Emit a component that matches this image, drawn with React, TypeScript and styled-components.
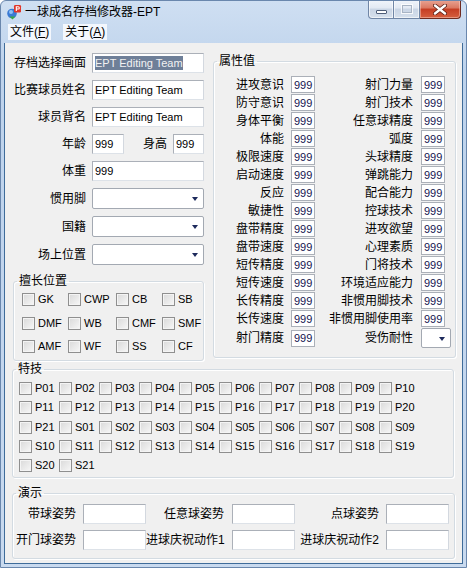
import React from 'react';
import styled, { createGlobalStyle } from 'styled-components';

const UI_FONT = `"Liberation Sans", "Noto Sans CJK SC", sans-serif`;

const leftAttrs = [
    '进攻意识', '防守意识', '身体平衡', '体能', '极限速度', '启动速度', '反应', '敏捷性',
    '盘带精度', '盘带速度', '短传精度', '短传速度', '长传精度', '长传速度', '射门精度',
];

const rightAttrs = [
    '射门力量', '射门技术', '任意球精度', '弧度', '头球精度', '弹跳能力', '配合能力', '控球技术',
    '进攻欲望', '心理素质', '门将技术', '环境适应能力', '非惯用脚技术', '非惯用脚使用率', '受伤耐性',
];

const positions = ['GK', 'CWP', 'CB', 'SB', 'DMF', 'WB', 'CMF', 'SMF', 'AMF', 'WF', 'SS', 'CF'];

const traits = [
    ...Array.from({ length: 21 }, (_, i) => `P${String(i + 1).padStart(2, '0')}`),
    ...Array.from({ length: 21 }, (_, i) => `S${String(i + 1).padStart(2, '0')}`),
];

const demoRows = [
    ['带球姿势', '任意球姿势', '点球姿势'],
    ['开门球姿势', '进球庆祝动作1', '进球庆祝动作2'],
];

// label width / gap before each demo input
const demoCols = [
    { w: 63, gap: 7 },
    { w: 78, gap: 8 },
    { w: 84, gap: 7 },
];

const App = (): JSX.Element => {
    const renderTitleBar = () => (
        <TitleBar>
            <AppIcon width="16" height="16" viewBox="0 0 16 16">
                <circle cx="6" cy="9.5" r="4.8" fill="#3a7ad4" />
                <circle cx="5" cy="8" r="2" fill="#8fc0f5" />
                <path d="M3.5 12.5 L6.5 15.5 L9.5 12.5 Z" fill="#37a843" />
                <rect x="8" y="1" width="7" height="7.5" rx="1.2" fill="#e0362a" />
                <path d="M10.3 7 V2.8 H12.2 A1.1 1.1 0 0 1 12.2 5 H10.3" stroke="#fff" strokeWidth="1.1" fill="none" />
            </AppIcon>
            <TitleText>一球成名存档修改器-EPT</TitleText>

            <Controls>
                <CtrlButton $w={26} $corner="left">
                    <MinGlyph />
                </CtrlButton>
                <CtrlButton $w={26}>
                    <MaxGlyph />
                </CtrlButton>
                <CloseButton>
                    <svg width="14" height="11" viewBox="0 0 14 11">
                        <path d="M2 1.5 L12 9.5 M12 1.5 L2 9.5" stroke="#5a1d14" strokeWidth="4" strokeLinecap="round" />
                        <path d="M2 1.5 L12 9.5 M12 1.5 L2 9.5" stroke="#fff" strokeWidth="2.4" strokeLinecap="round" />
                    </svg>
                </CloseButton>
            </Controls>
        </TitleBar>
    );

    const renderMenu = () => (
        <MenuBar>
            <MenuItem>文件(<u>F</u>)</MenuItem>
            <MenuItem>关于(<u>A</u>)</MenuItem>
        </MenuBar>
    );

    const renderForm = () => (
        <Form>
            <FormRow>
                <FormLabel>存档选择画面</FormLabel>
                <Field $w={112}><Selected>EPT Editing Team</Selected></Field>
            </FormRow>
            <FormRow>
                <FormLabel>比赛球员姓名</FormLabel>
                <Field $w={112}>EPT Editing Team</Field>
            </FormRow>
            <FormRow>
                <FormLabel>球员背名</FormLabel>
                <Field $w={112}>EPT Editing Team</Field>
            </FormRow>
            <FormRow>
                <FormLabel>年龄</FormLabel>
                <Field $w={32}>999</Field>
                <InlineLabel>身高</InlineLabel>
                <Field $w={31}>999</Field>
            </FormRow>
            <FormRow>
                <FormLabel>体重</FormLabel>
                <Field $w={112}>999</Field>
            </FormRow>
            {['惯用脚', '国籍', '场上位置'].map((label) => (
                <FormRow key={label}>
                    <FormLabel>{label}</FormLabel>
                    <Combo $w={112}><Arrow /></Combo>
                </FormRow>
            ))}
        </Form>
    );

    const renderPositions = () => (
        <PositionGroup>
            <Legend>擅长位置</Legend>
            <PositionGrid>
                {positions.map((p) => (
                    <CheckItem key={p}>
                        <CheckBox />
                        <CheckText>{p}</CheckText>
                    </CheckItem>
                ))}
            </PositionGrid>
        </PositionGroup>
    );

    const renderAttributes = () => (
        <AttrGroup>
            <Legend>属性值</Legend>
            <AttrList>
                {leftAttrs.map((left, i) => {
                    const right = rightAttrs[i];
                    const isLast = i === leftAttrs.length - 1;
                    return (
                        <AttrRow key={left}>
                            <AttrLabel $w={70} $gap={7}>{left}</AttrLabel>
                            <AttrField>999</AttrField>
                            <AttrLabel $w={98} $gap={8}>{right}</AttrLabel>
                            {isLast ? <Combo $w={30} $h={20}><Arrow /></Combo> : <AttrField>999</AttrField>}
                        </AttrRow>
                    );
                })}
            </AttrList>
        </AttrGroup>
    );

    const renderTraits = () => (
        <TraitGroup>
            <Legend>特技</Legend>
            <TraitGrid>
                {traits.map((t) => (
                    <CheckItem key={t}>
                        <CheckBox />
                        <CheckText>{t}</CheckText>
                    </CheckItem>
                ))}
            </TraitGrid>
        </TraitGroup>
    );

    const renderDemo = () => (
        <DemoGroup>
            <Legend>演示</Legend>
            <DemoBody>
                {demoRows.map((row) => (
                    <DemoRow key={row[0]}>
                        {row.map((label, i) => (
                            <React.Fragment key={label}>
                                <DemoLabel $w={demoCols[i].w} $gap={demoCols[i].gap}>{label}</DemoLabel>
                                <Field $w={63} />
                            </React.Fragment>
                        ))}
                    </DemoRow>
                ))}
            </DemoBody>
        </DemoGroup>
    );

    return (
        <>
            <GlobalStyle />
            <Window>
                {renderTitleBar()}
                {renderMenu()}
                <Client>
                    <TopRow>
                        <LeftCol>
                            {renderForm()}
                            {renderPositions()}
                        </LeftCol>
                        {renderAttributes()}
                    </TopRow>
                    {renderTraits()}
                    {renderDemo()}
                </Client>
            </Window>
        </>
    );
};

const GlobalStyle = createGlobalStyle`
    html, body {
        margin: 0;
        padding: 0;
        background: #ffffff;
    }

    body {
        font-family: ${UI_FONT};
        color: #000;
    }
`;

const Window = styled.div`
    box-sizing: border-box;
    display: flex;
    flex-direction: column;

    width: 467px;
    height: 568px;

    border: 1px solid #6a87ad;
    border-radius: 6px 6px 0 0;
    background: linear-gradient(180deg, #cfdff2 0%, #bed3ec 12%, #c3d6ee 60%, #c9daef 100%);
    overflow: hidden;
`;

const TitleBar = styled.div`
    display: flex;
    align-items: flex-start;

    height: 21px;
    flex-shrink: 0;
`;

const AppIcon = styled.svg`
    margin: 3px 0 0 5px;
    flex-shrink: 0;
`;

const TitleText = styled.div`
    margin: 4px 0 0 3px;

    font-size: 12px;
    line-height: 14px;
    color: #000;
`;

const Controls = styled.div`
    display: flex;
    margin: -1px 5px 0 auto;
`;

const CtrlButton = styled.div<{ $w: number; $corner?: 'left' }>`
    box-sizing: border-box;
    display: flex;
    justify-content: center;
    align-items: center;

    width: ${(p) => p.$w}px;
    height: 19px;

    border: 1px solid #7086a6;
    border-top: none;
    border-left: ${(p) => (p.$corner === 'left' ? '1px solid #7086a6' : 'none')};
    border-radius: ${(p) => (p.$corner === 'left' ? '0 0 0 4px' : '0')};
    background: linear-gradient(180deg, #f1f5fb 0%, #e2e9f3 45%, #c9d5e5 50%, #d6e0ec 100%);
    box-shadow: inset 0 0 0 1px rgba(255, 255, 255, 0.6);
`;

const CloseButton = styled.div`
    box-sizing: border-box;
    display: flex;
    justify-content: center;
    align-items: center;

    width: 41px;
    height: 19px;

    border: 1px solid #6e2b20;
    border-top: none;
    border-left: none;
    border-radius: 0 0 4px 0;
    background: linear-gradient(180deg, #e9a595 0%, #db7760 45%, #c53d23 50%, #d55f3f 100%);
    box-shadow: inset 0 0 0 1px rgba(255, 220, 210, 0.45);
`;

const MinGlyph = styled.div`
    width: 9px;
    height: 2px;
    margin-top: 6px;

    border: 1px solid #4d5d78;
    border-radius: 1px;
    background: #ffffff;
`;

const MaxGlyph = styled.div`
    width: 8px;
    height: 6px;

    border: 1px solid #a8b4c4;
    outline: 1px solid rgba(255, 255, 255, 0.8);
    background: transparent;
`;

const MenuBar = styled.div`
    display: flex;
    align-items: flex-start;
    gap: 12px;

    height: 21px;
    padding-left: 7px;
    flex-shrink: 0;
`;

const MenuItem = styled.div`
    height: 16px;
    margin-top: 2px;
    padding: 0 2px;

    font-size: 12px;
    line-height: 16px;
    background: rgba(250, 252, 255, 0.85);

    u {
        text-decoration-thickness: 1px;
        text-underline-offset: 1px;
    }
`;

const Client = styled.div`
    display: flex;
    flex-direction: column;
    flex: 1;

    margin: 0 3px 3px;
    border: 1px solid #3f6c9a;
    border-top: none;
    background: #f0f0f0;
`;

const TopRow = styled.div`
    display: flex;
    align-items: flex-start;
`;

const LeftCol = styled.div`
    display: flex;
    flex-direction: column;

    width: 203px;
    padding-top: 10px;
    flex-shrink: 0;
`;

const Form = styled.div`
    display: flex;
    flex-direction: column;
    gap: 7px;
`;

const FormRow = styled.div`
    display: flex;
    align-items: center;
`;

const FormLabel = styled.div`
    width: 81px;
    margin-right: 6px;

    font-size: 12px;
    line-height: 14px;
    text-align: right;
    white-space: nowrap;
`;

const InlineLabel = styled.div`
    width: 43px;
    margin-right: 6px;

    font-size: 12px;
    line-height: 14px;
    text-align: right;
`;

const Field = styled.div<{ $w: number; $h?: number }>`
    box-sizing: border-box;
    display: flex;
    align-items: center;

    width: ${(p) => p.$w}px;
    height: ${(p) => p.$h ?? 20}px;
    padding: 0 2px;

    border: 1px solid #abb0b8;
    border-bottom-color: #dde2e8;
    border-right-color: #d3d8df;
    background: #ffffff;

    font-family: "Liberation Sans", sans-serif;
    font-size: 11px;
    color: #000;
    white-space: nowrap;
    overflow: hidden;
`;

const Selected = styled.span`
    padding: 1px 0;
    background: #6e7f98;
    color: #f2f2f2;
`;

const Combo = styled(Field)`
    height: ${(p) => p.$h ?? 21}px;
    padding: 0;

    border: 1px solid #a3a9b2;
    border-radius: 2px;
    box-shadow: inset 0 0 0 1px #ffffff;
`;

const Arrow = styled.div`
    width: 0;
    height: 0;
    margin: 1px 5px 0 auto;

    border-left: 3.5px solid transparent;
    border-right: 3.5px solid transparent;
    border-top: 4px solid #1d2a5c;
`;

const Group = styled.fieldset`
    box-sizing: border-box;
    min-inline-size: 0;

    margin: 0;
    padding: 0;

    border: 1px solid #d3dbe2;
    border-radius: 3px;
    box-shadow: inset 1px 1px 0 #ffffff, 1px 1px 0 #ffffff;
`;

const Legend = styled.legend`
    margin-left: 3px;
    padding: 0 2px;

    font-size: 12px;
    line-height: 14px;
    color: #000;
`;

const PositionGroup = styled(Group)`
    width: 191px;
    margin: 9px 0 0 8px;
`;

const PositionGrid = styled.div`
    display: grid;
    grid-template-columns: 46px 48px 46px 46px;
    grid-auto-rows: 13px;
    row-gap: 10.5px;

    padding: 5px 0 7px 8px;
`;

const CheckItem = styled.div`
    display: flex;
    align-items: center;
    gap: 3px;

    height: 13px;
`;

const CheckBox = styled.div`
    box-sizing: border-box;
    width: 13px;
    height: 13px;
    flex-shrink: 0;

    border: 1px solid #8f8f8f;
    background: linear-gradient(135deg, #d9d9d9 0%, #eeeeee 70%, #f8f8f8 100%);
    box-shadow: inset 0 0 0 1px #f4f4f4;
`;

const CheckText = styled.span`
    font-family: "Liberation Sans", sans-serif;
    font-size: 11px;
    line-height: 13px;
    white-space: nowrap;
`;

const AttrGroup = styled(Group)`
    width: 243px;
    margin: 11px 0 0 5px;
`;

const AttrList = styled.div`
    display: flex;
    flex-direction: column;
    gap: 1px;

    padding: 8px 0 9px;
`;

const AttrRow = styled.div`
    display: flex;
    align-items: center;
`;

const AttrLabel = styled.div<{ $w: number; $gap: number }>`
    width: ${(p) => p.$w}px;
    margin-right: ${(p) => p.$gap}px;

    font-size: 12px;
    line-height: 14px;
    text-align: right;
    white-space: nowrap;
`;

const AttrField = styled.div`
    box-sizing: border-box;
    display: flex;
    align-items: center;

    width: 24px;
    height: 17px;
    padding-left: 2px;

    border: 1px solid #abb0b8;
    background: #ffffff;

    font-family: "Liberation Sans", sans-serif;
    font-size: 11px;
    color: #141450;
`;

const TraitGroup = styled(Group)`
    width: 442px;
    margin: 1px 0 0 7px;
`;

const TraitGrid = styled.div`
    display: grid;
    grid-template-columns: repeat(10, 40px);
    grid-auto-rows: 13px;
    row-gap: 6.25px;

    padding: 6px 0 5px 6px;
`;

const DemoGroup = styled(Group)`
    width: 443px;
    margin: 8px 0 0 7px;
`;

const DemoBody = styled.div`
    display: flex;
    flex-direction: column;
    gap: 6px;

    padding: 4px 0 8px;
`;

const DemoRow = styled.div`
    display: flex;
    align-items: center;
`;

const DemoLabel = styled.div<{ $w: number; $gap: number }>`
    width: ${(p) => p.$w}px;
    margin-right: ${(p) => p.$gap}px;

    font-size: 12px;
    line-height: 14px;
    text-align: right;
    white-space: nowrap;
`;

export default App;
